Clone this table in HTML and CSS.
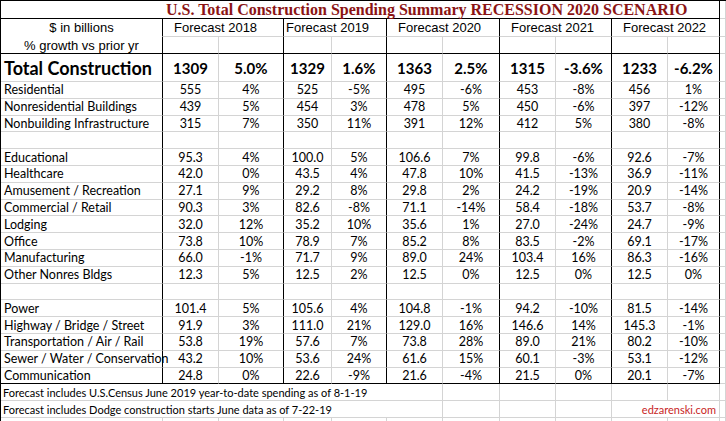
FILE: index.html
```html
<!DOCTYPE html>
<html>
<head>
<meta charset="utf-8">
<link rel="stylesheet" href="styles.css">
</head>
<body>
<div class="sheet">
  <div class="c title">U.S. Total Construction Spending Summary RECESSION 2020 SCENARIO</div><div class="c x"></div>

  <div class="c lbl hd nob">$ in billions</div>
  <div class="c fc">Forecast 2018</div>
  <div class="c fc f19">Forecast 2019</div>
  <div class="c fc">Forecast 2020</div>
  <div class="c fc">Forecast 2021</div>
  <div class="c fc">Forecast 2022</div>
  <div class="c x"></div>

  <div class="c lbl hd bb">% growth vs prior yr</div>
  <div class="c n bb"></div><div class="c p bb"></div>
  <div class="c n bb"></div><div class="c p bb"></div>
  <div class="c n bb"></div><div class="c p bb"></div>
  <div class="c n bb"></div><div class="c p bb"></div>
  <div class="c n bb"></div><div class="c p bb"></div>
  <div class="c x"></div>

  <div class="c lbl tot">Total Construction</div>
  <div class="c n tv">1309</div><div class="c p tv">5.0%</div>
  <div class="c n tv">1329</div><div class="c p tv">1.6%</div>
  <div class="c n tv">1363</div><div class="c p tv">2.5%</div>
  <div class="c n tv">1315</div><div class="c p tv">-3.6%</div>
  <div class="c n tv">1233</div><div class="c p tv">-6.2%</div>
  <div class="c x"></div>

  <div class="c lbl">Residential</div>
  <div class="c n">555</div><div class="c p">4%</div>
  <div class="c n">525</div><div class="c p">-5%</div>
  <div class="c n">495</div><div class="c p">-6%</div>
  <div class="c n">453</div><div class="c p">-8%</div>
  <div class="c n">456</div><div class="c p">1%</div>
  <div class="c x"></div>

  <div class="c lbl">Nonresidential Buildings</div>
  <div class="c n">439</div><div class="c p">5%</div>
  <div class="c n">454</div><div class="c p">3%</div>
  <div class="c n">478</div><div class="c p">5%</div>
  <div class="c n">450</div><div class="c p">-6%</div>
  <div class="c n">397</div><div class="c p">-12%</div>
  <div class="c x"></div>

  <div class="c lbl">Nonbuilding Infrastructure</div>
  <div class="c n">315</div><div class="c p">7%</div>
  <div class="c n">350</div><div class="c p">11%</div>
  <div class="c n">391</div><div class="c p">12%</div>
  <div class="c n">412</div><div class="c p">5%</div>
  <div class="c n">380</div><div class="c p">-8%</div>
  <div class="c x"></div>

  <div class="c lbl"></div>
  <div class="c n"></div><div class="c p"></div>
  <div class="c n"></div><div class="c p"></div>
  <div class="c n"></div><div class="c p"></div>
  <div class="c n"></div><div class="c p"></div>
  <div class="c n"></div><div class="c p"></div>
  <div class="c x"></div>

  <div class="c lbl">Educational</div>
  <div class="c n">95.3</div><div class="c p">4%</div>
  <div class="c n">100.0</div><div class="c p">5%</div>
  <div class="c n">106.6</div><div class="c p">7%</div>
  <div class="c n">99.8</div><div class="c p">-6%</div>
  <div class="c n">92.6</div><div class="c p">-7%</div>
  <div class="c x"></div>

  <div class="c lbl">Healthcare</div>
  <div class="c n">42.0</div><div class="c p">0%</div>
  <div class="c n">43.5</div><div class="c p">4%</div>
  <div class="c n">47.8</div><div class="c p">10%</div>
  <div class="c n">41.5</div><div class="c p">-13%</div>
  <div class="c n">36.9</div><div class="c p">-11%</div>
  <div class="c x"></div>

  <div class="c lbl">Amusement / Recreation</div>
  <div class="c n">27.1</div><div class="c p">9%</div>
  <div class="c n">29.2</div><div class="c p">8%</div>
  <div class="c n">29.8</div><div class="c p">2%</div>
  <div class="c n">24.2</div><div class="c p">-19%</div>
  <div class="c n">20.9</div><div class="c p">-14%</div>
  <div class="c x"></div>

  <div class="c lbl">Commercial / Retail</div>
  <div class="c n">90.3</div><div class="c p">3%</div>
  <div class="c n">82.6</div><div class="c p">-8%</div>
  <div class="c n">71.1</div><div class="c p">-14%</div>
  <div class="c n">58.4</div><div class="c p">-18%</div>
  <div class="c n">53.7</div><div class="c p">-8%</div>
  <div class="c x"></div>

  <div class="c lbl">Lodging</div>
  <div class="c n">32.0</div><div class="c p">12%</div>
  <div class="c n">35.2</div><div class="c p">10%</div>
  <div class="c n">35.6</div><div class="c p">1%</div>
  <div class="c n">27.0</div><div class="c p">-24%</div>
  <div class="c n">24.7</div><div class="c p">-9%</div>
  <div class="c x"></div>

  <div class="c lbl">Office</div>
  <div class="c n">73.8</div><div class="c p">10%</div>
  <div class="c n">78.9</div><div class="c p">7%</div>
  <div class="c n">85.2</div><div class="c p">8%</div>
  <div class="c n">83.5</div><div class="c p">-2%</div>
  <div class="c n">69.1</div><div class="c p">-17%</div>
  <div class="c x"></div>

  <div class="c lbl">Manufacturing</div>
  <div class="c n">66.0</div><div class="c p">-1%</div>
  <div class="c n">71.7</div><div class="c p">9%</div>
  <div class="c n">89.0</div><div class="c p">24%</div>
  <div class="c n">103.4</div><div class="c p">16%</div>
  <div class="c n">86.3</div><div class="c p">-16%</div>
  <div class="c x"></div>

  <div class="c lbl">Other Nonres Bldgs</div>
  <div class="c n">12.3</div><div class="c p">5%</div>
  <div class="c n">12.5</div><div class="c p">2%</div>
  <div class="c n">12.5</div><div class="c p">0%</div>
  <div class="c n">12.5</div><div class="c p">0%</div>
  <div class="c n">12.5</div><div class="c p">0%</div>
  <div class="c x"></div>

  <div class="c lbl"></div>
  <div class="c n"></div><div class="c p"></div>
  <div class="c n"></div><div class="c p"></div>
  <div class="c n"></div><div class="c p"></div>
  <div class="c n"></div><div class="c p"></div>
  <div class="c n"></div><div class="c p"></div>
  <div class="c x"></div>

  <div class="c lbl">Power</div>
  <div class="c n">101.4</div><div class="c p">5%</div>
  <div class="c n">105.6</div><div class="c p">4%</div>
  <div class="c n">104.8</div><div class="c p">-1%</div>
  <div class="c n">94.2</div><div class="c p">-10%</div>
  <div class="c n">81.5</div><div class="c p">-14%</div>
  <div class="c x"></div>

  <div class="c lbl">Highway / Bridge / Street</div>
  <div class="c n">91.9</div><div class="c p">3%</div>
  <div class="c n">111.0</div><div class="c p">21%</div>
  <div class="c n">129.0</div><div class="c p">16%</div>
  <div class="c n">146.6</div><div class="c p">14%</div>
  <div class="c n">145.3</div><div class="c p">-1%</div>
  <div class="c x"></div>

  <div class="c lbl">Transportation / Air / Rail</div>
  <div class="c n">53.8</div><div class="c p">19%</div>
  <div class="c n">57.6</div><div class="c p">7%</div>
  <div class="c n">73.8</div><div class="c p">28%</div>
  <div class="c n">89.0</div><div class="c p">21%</div>
  <div class="c n">80.2</div><div class="c p">-10%</div>
  <div class="c x"></div>

  <div class="c lbl">Sewer / Water / Conservation</div>
  <div class="c n">43.2</div><div class="c p">10%</div>
  <div class="c n">53.6</div><div class="c p">24%</div>
  <div class="c n">61.6</div><div class="c p">15%</div>
  <div class="c n">60.1</div><div class="c p">-3%</div>
  <div class="c n">53.1</div><div class="c p">-12%</div>
  <div class="c x"></div>

  <div class="c lbl bb">Communication</div>
  <div class="c n bb">24.8</div><div class="c p bb">0%</div>
  <div class="c n bb">22.6</div><div class="c p bb">-9%</div>
  <div class="c n bb">21.6</div><div class="c p bb">-4%</div>
  <div class="c n bb">21.5</div><div class="c p bb">0%</div>
  <div class="c n bb">20.1</div><div class="c p bb">-7%</div>
  <div class="c x"></div>

  <div class="c note">Forecast includes U.S.Census June 2019 year-to-date spending as of 8-1-19</div>
  <div class="c"></div><div class="c"></div><div class="c"></div><div class="c"></div><div class="c"></div>
  <div class="c x"></div>

  <div class="c note">Forecast includes Dodge construction starts June data as of 7-22-19</div>
  <div class="c"></div><div class="c"></div><div class="c"></div>
  <div class="c site">edzarenski.com</div>
  <div class="c x"></div>

  <div class="c nob"></div><div class="c nob"></div><div class="c nob"></div><div class="c nob"></div>
  <div class="c nob"></div><div class="c nob"></div><div class="c nob"></div><div class="c nob"></div>
  <div class="c nob"></div><div class="c nob"></div><div class="c nob"></div><div class="c nob x"></div>
</div>
</body>
</html>
```

FILE: styles.css
```css
html, body {
  margin: 0;
  padding: 0;
  background: #ffffff;
}

.sheet {
  display: grid;
  grid-template-columns: 162px 56px 65px 48px 55px 56px 57px 56px 56px 56px 52px 6px;
  grid-template-rows: 18px 18px 17px 28px repeat(20, 16.8px) 4px;
  border-left: 1px solid #000;
  border-top: 1px solid #000;
  width: 725px;
  overflow: hidden;
  font-family: Lato, "Liberation Sans", sans-serif;
  font-size: 12.5px;
  color: #000;
}

.c {
  box-sizing: border-box;
  border-right: 1px solid #d4d4d4;
  border-bottom: 1px solid #d4d4d4;
  display: flex;
  align-items: center;
  justify-content: center;
  white-space: nowrap;
  min-width: 0;
}

.x {
  border-right-color: #d4d4d4;
}

.title {
  grid-column: 1 / 12;
  justify-content: flex-start;
  padding-left: 165px;
  font-family: "Liberation Serif", "Times New Roman", serif;
  font-weight: bold;
  font-size: 16px;
  color: #8b1414;
  border-right-color: #000;
  border-bottom-color: #000;
}

.lbl {
  justify-content: flex-start;
  padding-left: 3px;
  border-right-color: #000;
}

.hd {
  justify-content: center;
  padding-left: 0;
  font-family: "Liberation Sans", Arial, sans-serif;
  font-size: 13px;
}

.nob {
  border-bottom-color: transparent;
}

.fc {
  grid-column: span 2;
  justify-content: flex-start;
  padding-left: 11px;
  font-family: "Liberation Sans", Arial, sans-serif;
  font-size: 13px;
  border-right-color: #000;
}

.f19 {
  padding-left: 2px;
}

.p {
  border-right-color: #000;
}

.bb {
  border-bottom-color: #000;
}

.tot {
  font-weight: bold;
  font-size: 18px;
}

.tv {
  font-weight: bold;
  font-size: 15px;
}

.note {
  grid-column: 1 / 7;
  justify-content: flex-start;
  padding-left: 2px;
  overflow: visible;
  font-size: 11px;
}

.site {
  grid-column: span 2;
  justify-content: flex-end;
  padding-right: 3px;
  color: #c81e1e;
  font-size: 11px;
}
```
